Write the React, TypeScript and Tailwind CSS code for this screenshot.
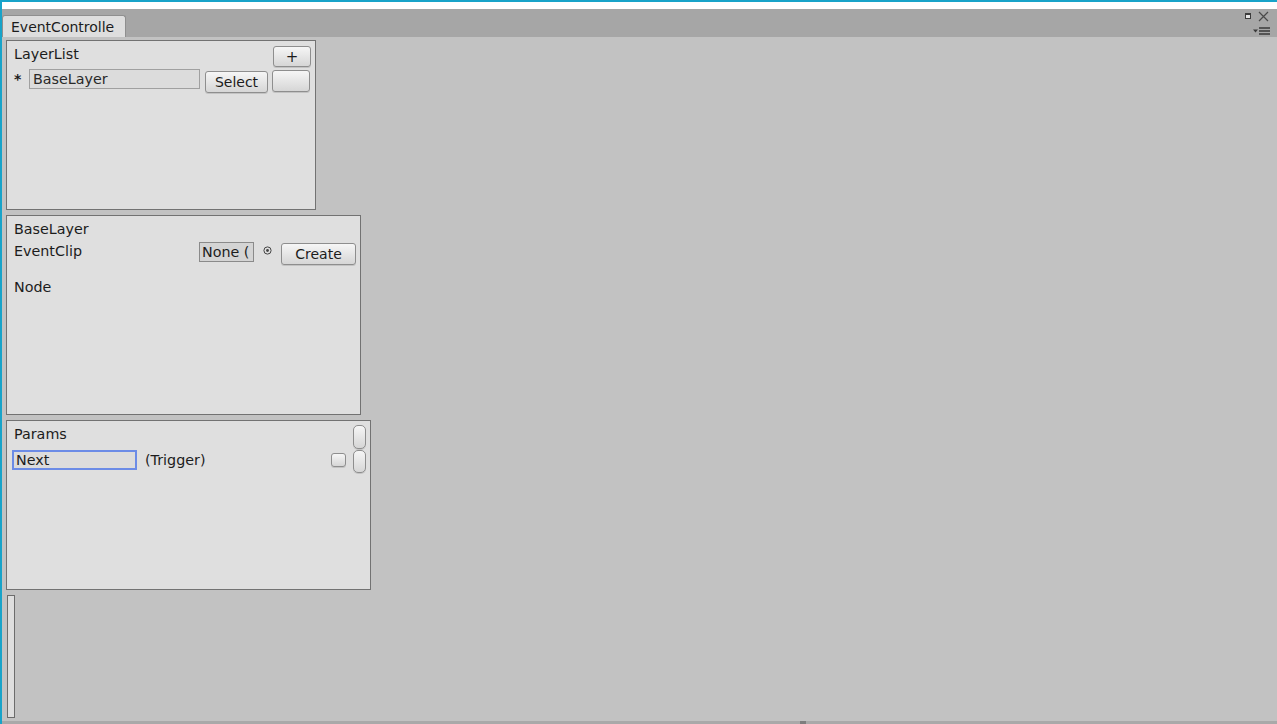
import React from "react";

const btn =
  "flex items-center justify-center rounded-[3px] border border-[#8e8e8e] bg-gradient-to-b from-[#f6f6f6] to-[#d6d6d6] text-[14px] text-[#1c1c1c] shadow-[0_1px_0_rgba(0,0,0,0.12)]";

function Panel({ className, children }: { className: string; children?: React.ReactNode }) {
  return (
    <div className={`relative border border-[#727272] bg-[#dfdfdf] ${className}`}>{children}</div>
  );
}

export default function App() {
  return (
    <div className="w-[1277px] h-[724px] overflow-hidden flex flex-col border-l-2 border-t-2 border-[#18a3c9] bg-[#c2c2c2] font-['DejaVu_Sans',sans-serif] text-[14.3px] text-[#1c1c1c]">
      {/* white strip above the tab bar */}
      <div className="h-[7px] bg-white shrink-0" />

      {/* tab bar */}
      <div className="relative h-[28px] shrink-0 bg-[#a6a6a6] flex items-end">
        <div className="w-[124px] h-[22px] rounded-t-[3px] border border-b-0 border-[#8f8f8f] bg-[#dedede] overflow-hidden whitespace-nowrap pl-[8px] pt-[2px] leading-[18px] text-[14px]">
          EventControlle
        </div>
        <div className="absolute right-[0px] top-[1px] w-[40px] h-[26px]">
          <div className="absolute left-[8px] top-[3px] w-[6px] h-[6px] border border-[#3c3c3c] border-t-[2px] bg-[#e6e6e6]" />
          <svg className="absolute left-[21px] top-[1px]" width="11" height="11" viewBox="0 0 11 11">
            <path d="M1 1 L10 10 M10 1 L1 10" stroke="#4a4a4a" strokeWidth="1.2" />
          </svg>
          <svg className="absolute left-[16px] top-[17px]" width="18" height="8" viewBox="0 0 18 8">
            <path d="M0 2.5 H5 L2.5 5.5 Z" fill="#3a3a3a" />
            <path d="M6 1 H17 M6 4 H17 M6 7 H17" stroke="#3a3a3a" strokeWidth="1.3" />
          </svg>
        </div>
      </div>

      {/* content */}
      <div className="relative flex-1 flex flex-col gap-[5px] pl-[4px] pt-[3px]">
        <Panel className="w-[310px] h-[170px]">
          <div className="flex items-start justify-between pl-[7px] pr-[4px] pt-[4px]">
            <span className="leading-[18px]">LayerList</span>
            <div className={`${btn} w-[38px] h-[21px] mt-[1px] text-[15px] pt-[2px]`}>+</div>
          </div>
          <div className="flex items-start pl-[7px] pr-[4px] mt-[2px]">
            <span className="w-[15px] text-[14px] leading-none mt-[3px] font-bold">*</span>
            <div className="w-[171px] h-[20px] border border-[#a0a0a0] bg-[#dcdcdc] pl-[3px] leading-[18px] text-[#2a2a2a]">
              BaseLayer
            </div>
            <div className={`${btn} w-[63px] h-[22px] ml-[5px] mt-[2px]`}>Select</div>
            <div className={`${btn} w-[38px] h-[22px] ml-[4px] mt-[1px]`} />
          </div>
        </Panel>

        <Panel className="w-[355px] h-[200px]">
          <div className="pl-[7px] pt-[4px] leading-[18px]">BaseLayer</div>
          <div className="flex items-start pl-[7px] pr-[4px] mt-[4px]">
            <span className="flex-1 leading-[18px]">EventClip</span>
            <div className="w-[55px] h-[20px] border border-[#8a8a8a] bg-[#d4d4d4] pl-[2px] leading-[18px] overflow-hidden whitespace-nowrap">
              None (
            </div>
            <svg className="ml-[9px] mr-[9px] mt-[4px]" width="9" height="9" viewBox="0 0 9 9">
              <circle cx="4.5" cy="4.5" r="3.6" fill="none" stroke="#444" strokeWidth="1" />
              <circle cx="4.5" cy="4.5" r="1.4" fill="#444" />
            </svg>
            <div className={`${btn} w-[75px] h-[22px] mt-[1px]`}>Create</div>
          </div>
          <div className="pl-[7px] mt-[13px] leading-[18px]">Node</div>
        </Panel>

        <Panel className="w-[365px] h-[170px]">
          <div className="flex items-start justify-between pl-[7px] pr-[4px] pt-[4px]">
            <span className="leading-[18px]">Params</span>
            <div className={`${btn} w-[13px] h-[24px] rounded-[5px]`} />
          </div>
          <div className="flex items-start pl-[5px] pr-[4px] mt-[1px]">
            <div className="w-[125px] h-[20px] border-2 border-[#6b8be6] bg-[#dcdcdc] pl-[2px] leading-[16px]">
              Next
            </div>
            <span className="ml-[8px] leading-[20px]">(Trigger)</span>
            <div className="flex-1" />
            <div className={`${btn} w-[15px] h-[14px] mt-[3px] mr-[7px]`} />
            <div className={`${btn} w-[13px] h-[23px] rounded-[5px]`} />
          </div>
        </Panel>

        <div className="ml-[1px] w-[8px] h-[123px] border border-[#6c6c6c] bg-[#dedede]" />

        <div className="absolute left-0 right-0 bottom-0 h-[3px] bg-[#a9a9a9]">
          <div className="absolute left-[798px] top-0 w-[6px] h-[3px] bg-[#7e7e7e]" />
        </div>
      </div>
    </div>
  );
}
